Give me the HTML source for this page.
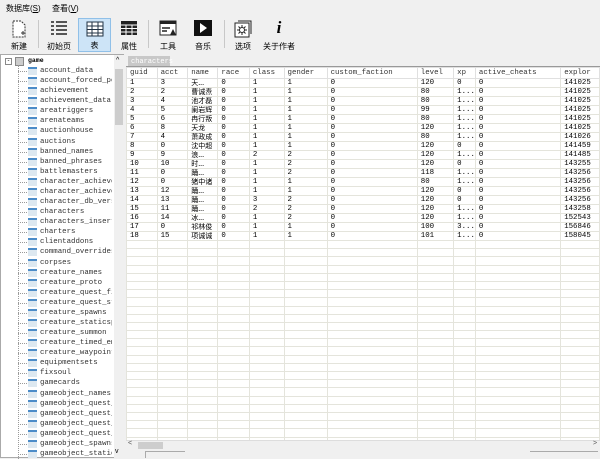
<!DOCTYPE html>
<html><head><meta charset="utf-8"><style>
*{margin:0;padding:0;box-sizing:border-box}
body{width:600px;height:458px;overflow:hidden;background:#f0f0f0;font-family:"Liberation Sans","Noto Sans CJK SC",sans-serif;position:relative}
.abs{position:absolute}
.menu{top:3px;font-size:8px;color:#000}
.tb{position:absolute;top:18px;height:34px;text-align:center;font-size:8px;color:#000}
.tb .ic{position:absolute;left:50%;transform:translateX(-50%);top:2px}
.tb span{position:absolute;bottom:0;left:0;right:0;text-align:center}
.sep{position:absolute;top:20px;width:1px;height:28px;background:#c8c8c8}
#tree{left:0;top:54px;width:124px;height:404px;background:#fff;border:1px solid #aaa}
.ti{position:absolute;left:40px;font-family:"Liberation Mono",monospace;font-size:7.4px;color:#333;white-space:nowrap;width:72px;overflow:hidden;height:10px;line-height:10px}
.tic{position:absolute;left:28px;width:9px;height:8px;background:#dde8f0;border-top:2px solid #4c8cc8}
.tl{position:absolute;left:18px;width:9px;border-top:1px dotted #999}
#grid{left:126px;top:66px;width:474px;height:374px;background:#fff;overflow:hidden;border-top:1px solid #999}
table{border-collapse:collapse;font-family:"Liberation Mono","Noto Sans CJK SC",monospace;font-size:7.4px;color:#000;table-layout:fixed}
td{border:1px solid #e4e4dc;height:8.2px;line-height:8px;padding:0 0 0 3px;white-space:nowrap;overflow:hidden;vertical-align:middle}
td.c{font-family:"Noto Sans CJK SC",sans-serif;font-size:7px;line-height:7px}
tr{height:8.2px}
tr.h td{height:11px;color:#333;border-color:#e0e0e0}
</style></head><body>
<div class="abs menu" style="left:6px">数据库(<u>S</u>)</div>
<div class="abs menu" style="left:52px">查看(<u>V</u>)</div>

<div class="tb" style="left:4px;width:30px"><svg class="ic" width="14" height="18" viewBox="0 0 14 18"><path d="M1 1h8l4 4v12H1z" fill="#fff" stroke="#333" stroke-dasharray="2 1"/><path d="M9 13h4M11 11v4" stroke="#333"/></svg><span>新建</span></div>
<div class="sep" style="left:38px"></div>
<div class="tb" style="left:42px;width:34px"><svg class="ic" width="18" height="16" viewBox="0 0 18 16"><path d="M1 2h3M6 2h11M1 6h3M6 6h11M1 10h3M6 10h11M1 14h3M6 14h11" stroke="#222" stroke-width="1.5"/></svg><span>初始页</span></div>
<div class="tb" style="left:78px;width:33px;background:#cde4f7;border:1px solid #90c0e8"><svg class="ic" width="18" height="16" viewBox="0 0 18 16"><rect x="1" y="1" width="16" height="14" fill="#fff" stroke="#234"/><path d="M1 5h16M1 8.5h16M1 12h16M6 1v14M12 1v14" stroke="#234"/></svg><span>表</span></div>
<div class="tb" style="left:113px;width:32px"><svg class="ic" width="18" height="16" viewBox="0 0 18 16"><rect x="1" y="1" width="16" height="14" fill="#222"/><path d="M1 5h16M1 8.5h16M1 12h16M6 5v10M12 5v10" stroke="#fff"/></svg><span>属性</span></div>
<div class="sep" style="left:148px"></div>
<div class="tb" style="left:152px;width:32px"><svg class="ic" width="18" height="16" viewBox="0 0 18 16"><rect x="1" y="1" width="16" height="14" fill="#fff" stroke="#222"/><rect x="1" y="1" width="16" height="3" fill="#222"/><path d="M3 8h8M3 11h5" stroke="#222" stroke-width="1.5"/><path d="M11 15l3-6 3 6z" fill="#222"/></svg><span>工具</span></div>
<div class="tb" style="left:187px;width:32px"><svg class="ic" width="18" height="16" viewBox="0 0 18 16"><rect x="0" y="0" width="18" height="16" fill="#111"/><path d="M6 3l7 5-7 5z" fill="#fff"/></svg><span>音乐</span></div>
<div class="sep" style="left:224px"></div>
<div class="tb" style="left:228px;width:30px"><svg class="ic" width="18" height="18" viewBox="0 0 18 18"><rect x="1" y="3" width="14" height="14" fill="#fff" stroke="#222"/><path d="M4 1h13v13" fill="none" stroke="#222"/><circle cx="8" cy="10" r="2.5" fill="none" stroke="#222"/><path d="M8 5v2M8 13v2M3 10h2M11 10h2M4.5 6.5l1.5 1.5M10 12l1.5 1.5M4.5 13.5l1.5-1.5M10 8l1.5-1.5" stroke="#222"/></svg><span>选项</span></div>
<div class="tb" style="left:260px;width:38px"><div class="ic" style="font:italic bold 17px 'Liberation Serif',serif;top:0">i</div><span>关于作者</span></div>

<div id="tree" class="abs">
<div class="abs" style="left:4px;top:3px;width:7px;height:7px;border:1px solid #888;font-size:6px;line-height:5px;text-align:center">-</div>
<div class="abs" style="left:14px;top:2px;width:9px;height:9px;background:#ccc;border:1px solid #888"></div>
<div class="abs" style="left:27px;top:2px;font:bold 6.5px 'Liberation Mono',monospace">game</div>
<div class="abs" style="left:17px;top:10px;height:394px;border-left:1px dotted #999"></div>
<div class="abs" style="left:113px;top:0;width:10px;height:403px;background:#f0f0f0"></div>
<div class="abs" style="left:114px;top:14px;width:8px;height:56px;background:#cdcdcd"></div>
<div class="abs" style="left:115px;top:2px;font-size:7px">^</div>
<div class="abs" style="left:114px;top:393px;font-size:7px">v</div>
</div>
<div id="items"></div>

<div class="abs" style="left:126px;top:54px;width:474px;height:12px;background:#f0f0f0"></div>
<div class="abs" style="left:128px;top:56px;width:42px;height:11px;background:#c8c8c8;color:#fff;font:7px 'Liberation Mono',monospace;padding:2px 0 0 3px">characters</div>

<div id="grid" class="abs">
<table id="t">
<colgroup><col style="width:32px"><col style="width:32px"><col style="width:31px"><col style="width:33px"><col style="width:36px"><col style="width:45px"><col style="width:94px"><col style="width:38px"><col style="width:19px"><col style="width:89px"><col style="width:40px"></colgroup>
</table>
</div>
<div class="abs" style="left:126px;top:440px;width:474px;height:11px;background:#f0f0f0;border-top:1px solid #ddd"></div>
<div class="abs" style="left:138px;top:442px;width:25px;height:7px;background:#cdcdcd"></div>
<div class="abs" style="left:128px;top:440px;font-size:7px;color:#555">&lt;</div>
<div class="abs" style="left:593px;top:440px;font-size:7px;color:#555">&gt;</div>
<div class="abs" style="left:126px;top:451px;width:474px;height:7px;background:#f0f0f0"></div>
<div class="abs" style="left:145px;top:451px;width:40px;height:7px;border-top:1px solid #aaa;border-left:1px solid #aaa"></div>
<div class="abs" style="left:530px;top:451px;width:68px;height:7px;border-top:1px solid #aaa"></div>

<script>
var items="account_data account_forced_permi achievement achievement_data areatriggers arenateams auctionhouse auctions banned_names banned_phrases battlemasters character_achievemen character_achievemen character_db_version characters characters_insert_qu charters clientaddons command_overrides corpses creature_names creature_proto creature_quest_finis creature_quest_start creature_spawns creature_staticspawn creature_summon creature_timed_emote creature_waypoints equipmentsets fixsoul gamecards gameobject_names gameobject_quest_fin gameobject_quest_ite gameobject_quest_pic gameobject_quest_sta gameobject_spawns gameobject_staticspa".split(" ");
var h="";items.forEach(function(n,i){var y=66+i*10.08;h+='<div class="tl" style="top:'+(y+5)+'px"></div><div class="tic" style="top:'+(y+1)+'px"></div><div class="ti" style="top:'+y+'px">'+n+'</div>';});
document.getElementById("items").innerHTML=h;
var rows=[["1","3","天...","0","1","1","0","120","0","0","141025"],["2","2","曹诚焘","0","1","1","0","80","1...","0","141025"],["3","4","池才磊","0","1","1","0","80","1...","0","141025"],["4","5","阑岩辉","0","1","1","0","99","1...","0","141025"],["5","6","冉行叛","0","1","1","0","80","1...","0","141025"],["6","8","天龙","0","1","1","0","120","1...","0","141025"],["7","4","萧政成","0","1","1","0","80","1...","0","141026"],["8","0","沈中超","0","1","1","0","120","0","0","141459"],["9","9","浪...","0","2","2","0","120","1...","0","141485"],["10","10","时...","0","1","2","0","120","0","0","143255"],["11","0","踊...","0","1","2","0","118","1...","0","143256"],["12","0","猪中诸","0","1","1","0","80","1...","0","143256"],["13","12","踊...","0","1","1","0","120","0","0","143256"],["14","13","踊...","0","3","2","0","120","0","0","143256"],["15","11","踊...","0","2","2","0","120","1...","0","143258"],["16","14","冰...","0","1","2","0","120","1...","0","152543"],["17","0","祁林俊","0","1","1","0","100","3...","0","156846"],["18","15","项诚诚","0","1","1","0","101","1...","0","158045"]];
var s='<tr class="h"><td>guid</td><td>acct</td><td>name</td><td>race</td><td>class</td><td>gender</td><td>custom_faction</td><td>level</td><td>xp</td><td>active_cheats</td><td>explor</td></tr>';
rows.forEach(function(r){s+="<tr>";r.forEach(function(c,i){s+=(i==2?'<td class="c">':'<td>')+c+"</td>";});s+="</tr>";});
for(var i=0;i<26;i++)s+="<tr>"+"<td></td>".repeat(11)+"</tr>";
document.getElementById("t").insertAdjacentHTML("beforeend",s);
</script>
</body></html>
